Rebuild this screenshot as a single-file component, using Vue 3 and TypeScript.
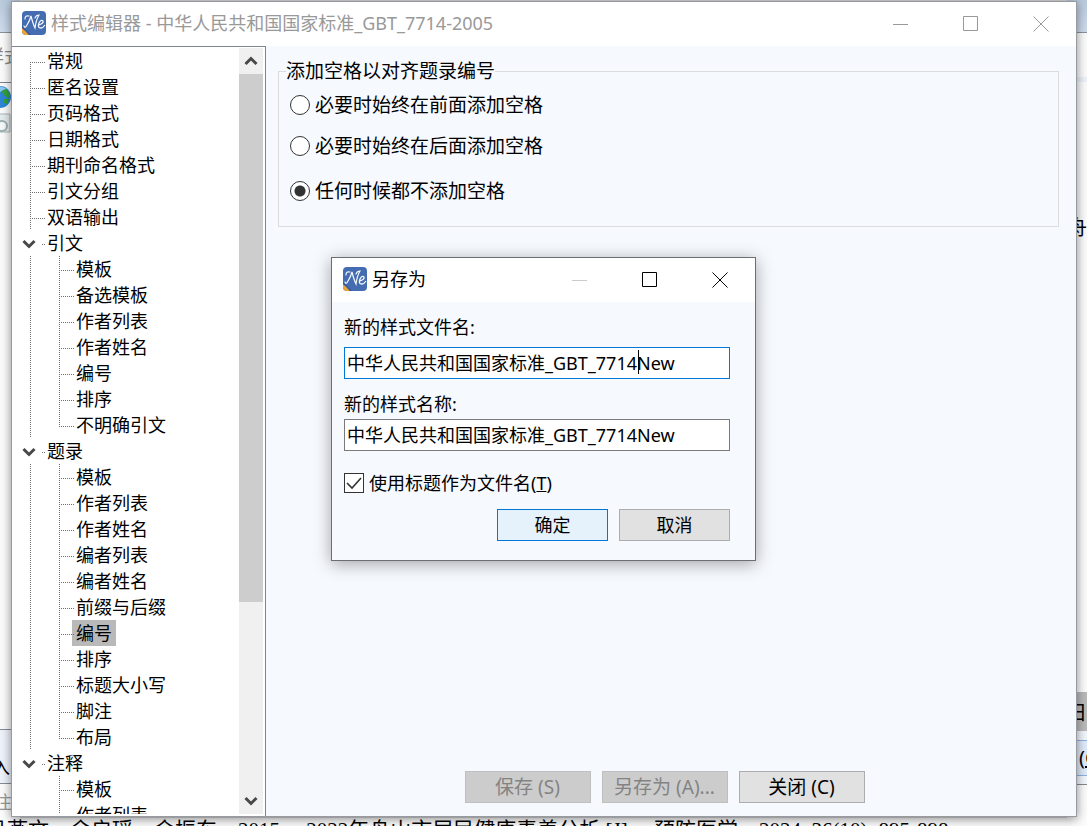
<script setup lang="ts">
import { ref } from 'vue'

interface TreeNode {
  label: string
  children?: string[]
}

interface Row {
  key: string
  label: string
  kind: 'leaf' | 'group' | 'child'
  first: boolean
  last: boolean
  trunk: boolean
}

const nodes: TreeNode[] = [
  { label: '常规' },
  { label: '匿名设置' },
  { label: '页码格式' },
  { label: '日期格式' },
  { label: '期刊命名格式' },
  { label: '引文分组' },
  { label: '双语输出' },
  { label: '引文', children: ['模板', '备选模板', '作者列表', '作者姓名', '编号', '排序', '不明确引文'] },
  {
    label: '题录',
    children: ['模板', '作者列表', '作者姓名', '编者列表', '编者姓名', '前缀与后缀', '编号', '排序', '标题大小写', '脚注', '布局'],
  },
  { label: '注释', children: ['模板', '作者列表'] },
]

const rows: Row[] = nodes.flatMap((node, i) => {
  const isLastGroup = i === nodes.length - 1
  const own: Row = {
    key: node.label,
    label: node.label,
    kind: node.children ? 'group' : 'leaf',
    first: i === 0,
    last: false,
    trunk: false,
  }
  const kids = (node.children ?? []).map((label, j, all): Row => ({
    key: `${node.label}/${label}`,
    label,
    kind: 'child',
    first: false,
    last: !isLastGroup && j === all.length - 1,
    trunk: !isLastGroup,
  }))
  return [own, ...kids]
})

const selected = ref('题录/编号')

const options = ['必要时始终在前面添加空格', '必要时始终在后面添加空格', '任何时候都不添加空格']
const spacing = ref(options[2])

const fileName = ref('中华人民共和国国家标准_GBT_7714New')
const styleName = ref('中华人民共和国国家标准_GBT_7714New')
const useTitle = ref(true)
</script>

<template>
  <div class="desktop">
    <div class="behind" aria-hidden="true">
      <div class="behind-sides">
        <div class="side side-left">
          <div class="glass"></div>
          <div class="tab"><span>样式</span></div>
          <div class="tools">
            <svg width="22" height="24" viewBox="0 0 22 24">
              <circle cx="11" cy="12" r="11" fill="#2f86d6" />
              <path d="M4 4Q11-1 18 4Q12 6 8 9Z" fill="#8fc8f2" />
              <path d="M12 6L17 4L21 9L20 13L16 11ZM15 14L20 14L18 19L15 18Z" fill="#35a23a" />
            </svg>
            <svg width="22" height="22" viewBox="0 0 22 22">
              <path d="M1 2H21V20H1Z" fill="#e6edee" stroke="#a9b5b8" />
              <circle cx="13" cy="14" r="5" fill="#f6fafa" stroke="#9fb0b5" stroke-width="2" />
            </svg>
          </div>
          <div class="foot"><span>入</span></div>
          <div class="note"><span>注</span></div>
        </div>
        <div class="side side-right">
          <div class="glass"></div>
          <div class="sheet"><span>舟</span></div>
          <div class="cell"><span>日</span></div>
          <div class="panel"><div class="panel-button">(<u>C</u></div></div>
        </div>
      </div>
      <p class="citation">且燕文，余启瑶，金振东．2015 —2022年舟山市居民健康素养分析 [J] ．预防医学，2024, 36(10): 895-898</p>
    </div>

    <main class="window">
      <header class="titlebar inactive">
        <svg class="logo" width="24" height="24" viewBox="0 0 24 24">
          <rect width="24" height="24" rx="4" fill="#446cb1" />
          <path d="M0 17L7 24H4Q0 24 0 20Z" fill="#f0a332" />
          <path d="M0 17L4 20L7 24L9 24L0 15Z" fill="#35558f" />
          <path d="M2 15Q3 18 5 14Q8 9 9 5Q11 13 13 17Q14 9 17 4Q14 4 13 7M3 8Q3 4 7 5" fill="none" stroke="#f4f7fc" stroke-width="1.2" stroke-linecap="round" />
          <path d="M17 14Q22 12 21 10Q19 8 17 12Q15 17 19 17Q21 17 23 14" fill="none" stroke="#f4f7fc" stroke-width="1.3" />
        </svg>
        <h1>样式编辑器 - 中华人民共和国国家标准_GBT_7714-2005</h1>
        <button type="button" aria-label="最小化"><svg width="16" height="16"><path d="M0 8.500H15" /></svg></button>
        <button type="button" aria-label="最大化"><svg width="16" height="16"><path d="M.5.5H14.500V14.500H.5Z" /></svg></button>
        <button type="button" aria-label="关闭"><svg width="16" height="16"><path d="M.5.5L15.500 15.500M15.500.5L.5 15.500" /></svg></button>
      </header>

      <div class="body">
        <nav class="tree-box">
          <ul class="tree">
            <li v-for="row in rows" :key="row.key" class="row">
              <span v-if="row.kind === 'child'" class="indent" :class="{ line: row.trunk }"></span>
              <span class="branch" :class="[row.kind, { first: row.first, last: row.last }]">
                <svg v-if="row.kind === 'group'" class="chevron" width="14" height="10" viewBox="0 0 14 10">
                  <path d="M1.500 2L7 7.500L12.500 2" />
                </svg>
              </span>
              <button type="button" class="node" :class="{ selected: row.key === selected }" @click="selected = row.key">
                {{ row.label }}
              </button>
            </li>
          </ul>
          <div class="scrollbar">
            <button type="button" aria-label="向上滚动"><svg width="14" height="10" viewBox="0 0 14 10"><path d="M1.500 8L7 2.500L12.500 8" /></svg></button>
            <div class="track"><div class="thumb"></div></div>
            <button type="button" aria-label="向下滚动"><svg width="14" height="10" viewBox="0 0 14 10"><path d="M1.500 2L7 7.500L12.500 2" /></svg></button>
          </div>
        </nav>

        <section class="content">
          <fieldset>
            <legend>添加空格以对齐题录编号</legend>
            <label v-for="option in options" :key="option" class="radio">
              <input v-model="spacing" type="radio" name="spacing" :value="option" />{{ option }}
            </label>
          </fieldset>
          <div class="actions">
            <button type="button" class="push" disabled>保存 (S)</button>
            <button type="button" class="push" disabled>另存为 (A)...</button>
            <button type="button" class="push">关闭 (C)</button>
          </div>
        </section>
      </div>

      <div class="overlay">
        <form class="dialog" role="dialog" aria-labelledby="dialog-title" @submit.prevent>
          <header class="titlebar">
            <svg class="logo" width="24" height="24" viewBox="0 0 24 24">
              <rect width="24" height="24" rx="4" fill="#446cb1" />
              <path d="M0 17L7 24H4Q0 24 0 20Z" fill="#f0a332" />
              <path d="M0 17L4 20L7 24L9 24L0 15Z" fill="#35558f" />
              <path d="M2 15Q3 18 5 14Q8 9 9 5Q11 13 13 17Q14 9 17 4Q14 4 13 7M3 8Q3 4 7 5" fill="none" stroke="#f4f7fc" stroke-width="1.2" stroke-linecap="round" />
              <path d="M17 14Q22 12 21 10Q19 8 17 12Q15 17 19 17Q21 17 23 14" fill="none" stroke="#f4f7fc" stroke-width="1.3" />
            </svg>
            <h2 id="dialog-title">另存为</h2>
            <button type="button" aria-label="最小化" disabled><svg width="16" height="16"><path d="M0 8.500H15" /></svg></button>
            <button type="button" aria-label="最大化"><svg width="16" height="16"><path d="M.5.5H14.500V14.500H.5Z" /></svg></button>
            <button type="button" aria-label="关闭"><svg width="16" height="16"><path d="M.5.5L15.500 15.500M15.500.5L.5 15.500" /></svg></button>
          </header>
          <div class="dialog-body">
            <label class="caption" for="file-name">新的样式文件名:</label>
            <div class="field active">
              <input id="file-name" v-model="fileName" type="text" />
              <i class="caret"></i>
            </div>
            <label class="caption second" for="style-name">新的样式名称:</label>
            <div class="field close">
              <input id="style-name" v-model="styleName" type="text" />
            </div>
            <label class="check">
              <input v-model="useTitle" type="checkbox" />
              <span>使用标题作为文件名(<u>T</u>)</span>
            </label>
            <div class="dialog-actions">
              <button type="submit" class="push primary">确定</button>
              <button type="button" class="push">取消</button>
            </div>
          </div>
        </form>
      </div>
    </main>
  </div>
</template>

<style>
body {
  margin: 0;
}
</style>

<style scoped>
* {
  box-sizing: border-box;
}

.desktop {
  position: relative;
  height: 100vh;
  overflow: hidden;
  background: #fcfcfc;
  color: #000;
  font: 400 18px/26px "Noto Sans", "Noto Sans CJK SC", sans-serif;
}

button,
input {
  margin: 0;
  font: inherit;
  color: inherit;
}

/* Surroundings that peek out around the window */
.behind {
  display: flex;
  flex-direction: column;
  height: 100%;
}

.behind-sides {
  display: flex;
  flex: 1;
  justify-content: space-between;
  min-height: 0;
  background: #d9d9d9;
}

.side {
  display: flex;
  flex-direction: column;
  width: 20px;
  overflow: hidden;
  background: #fcfcfc;
}

.side span {
  display: block;
  white-space: nowrap;
}

.glass {
  flex: none;
  height: 33px;
  border-bottom: 1px solid #8a929e;
  background: linear-gradient(#b9cadd, #cfdced);
}

.tab {
  flex: none;
  height: 50px;
  padding-top: 10px;
  border-bottom: 1px solid #7d8290;
  color: #888;
}

.tab span {
  margin-left: -14px;
}

.tools {
  flex: 1;
  padding-top: 2px;
}

.tools svg {
  display: block;
  margin: 0 0 3px -11px;
}

.foot {
  flex: none;
  height: 55px;
  padding-top: 24px;
  border: solid #858b98;
  border-width: 1px 0;
  background: #eff3fb;
}

.foot span {
  margin-left: -8px;
}

.note {
  flex: none;
  height: 34px;
  padding-top: 5px;
  color: #999;
}

.note span {
  margin-left: -6px;
}

.side-right {
  font-size: 20px;
}

.sheet {
  flex: 1;
  padding-top: 182px;
  background: linear-gradient(#fcfcfc 44px, #eef2f9 44px, #eef2f9 49px, #fcfcfc 49px);
}

.cell {
  flex: none;
  height: 39px;
  padding-top: 8px;
  background: #bababa;
}

.panel {
  flex: none;
  height: 54px;
  margin-bottom: 33px;
  padding: 9px 0;
  border-bottom: 1px solid #888;
  background: #f2f6fd;
}

.panel-button {
  height: 36px;
  padding: 4px 0 0 12px;
  border: solid #8db2e3;
  border-width: 1px 0;
  background: #dfebfb;
}

.citation {
  flex: none;
  height: 8px;
  margin: 0 0 0 -14px;
  overflow: hidden;
  font: 21px/24px "Liberation Serif", "Noto Sans CJK SC", serif;
  white-space: nowrap;
}

/* Main window */
.window {
  position: absolute;
  inset: 1px 10px 9px 11px;
  display: flex;
  flex-direction: column;
  border: 1px solid #979ba1;
  background: #f6f9fe;
  box-shadow: 0 2px 10px rgba(0, 0, 0, 0.45);
}

.titlebar {
  display: flex;
  flex: none;
  align-items: center;
  height: 44px;
  padding: 0 0 2px 11px;
  background: #fff;
}

.titlebar.inactive {
  padding-left: 10px;
  color: #999;
}

.titlebar h1,
.titlebar h2 {
  flex: 1;
  margin: 0 0 0 5px;
  font-size: 18px;
  font-weight: inherit;
  white-space: nowrap;
}

.titlebar button {
  display: grid;
  align-self: flex-start;
  place-items: center;
  width: 70px;
  height: 44px;
  padding: 0;
  border: 0;
  background: none;
}

.titlebar button:disabled {
  color: #ccc;
}

.titlebar button svg {
  fill: none;
  stroke: currentColor;
}

.body {
  display: flex;
  flex: 1;
  min-height: 0;
}

/* Category tree */
.tree-box {
  display: flex;
  flex: none;
  width: 254px;
  padding: 1px 2px 2px 0;
  border: solid #7f858f;
  border-width: 1px 1px 0 0;
  background: #fff;
}

.tree {
  flex: 1;
  margin: 0;
  padding: 0;
  overflow: hidden;
  list-style: none;
}

.row {
  display: flex;
  height: 26px;
}

.indent,
.branch {
  position: relative;
  flex: none;
}

.indent {
  width: 29px;
}

.branch {
  width: 31px;
}

.indent.line::before,
.branch::before {
  content: "";
  position: absolute;
  top: 0;
  bottom: 0;
  left: 18px;
  width: 1px;
  background: repeating-linear-gradient(#707070 0 1px, transparent 1px 2px);
}

.branch::after {
  content: "";
  position: absolute;
  top: 14px;
  left: 20px;
  width: 13px;
  height: 1px;
  background: repeating-linear-gradient(90deg, #707070 0 1px, transparent 1px 2px);
}

.branch.first::before {
  top: 14px;
}

.branch.last::before {
  bottom: 11px;
}

.branch.group::before {
  display: none;
}

.branch.group::after {
  left: 30px;
  width: 3px;
}

.chevron {
  display: block;
  margin: 9px 0 0 10px;
}

.chevron path,
.scrollbar path {
  fill: none;
  stroke: #484848;
  stroke-width: 3;
}

.node {
  height: 26px;
  padding: 0 4px;
  border: 0;
  background: none;
  line-height: 26px;
  white-space: nowrap;
}

.node.selected {
  background: #b9b9b9;
}

.scrollbar {
  display: flex;
  flex-direction: column;
  width: 24px;
  background: #f0f0f0;
}

.scrollbar button {
  display: grid;
  place-items: center;
  height: 26px;
  padding: 0;
  border: 0;
  background: none;
}

.track {
  flex: 1;
}

.thumb {
  height: 74%;
  background: #cdcdcd;
}

/* Settings pane */
.content {
  display: flex;
  flex: 1;
  flex-direction: column;
  justify-content: space-between;
  padding: 13px 17px 13px 12px;
  font-size: 19px;
}

fieldset {
  min-width: 0;
  margin: 0;
  padding: 10px 7px 23px;
  border: 1px solid #dcdcdc;
}

legend {
  padding: 0;
  line-height: 24px;
}

.radio {
  display: flex;
  gap: 5px;
  align-items: center;
  margin-left: 4px;
  line-height: 24px;
}

.radio + .radio {
  margin-top: 17px;
}

.radio + .radio + .radio {
  margin-top: 21px;
}

.radio input {
  width: 20px;
  height: 20px;
  border: 1px solid #333;
  border-radius: 50%;
  background: #fff;
  appearance: none;
}

.radio input:checked {
  background: radial-gradient(circle, #333 5px, #fff 6px);
}

.actions {
  display: flex;
  gap: 11px;
  justify-content: center;
  padding-right: 8px;
}

.push {
  height: 32px;
  padding: 0;
  border: 1px solid #adadad;
  background: #e1e1e1;
  line-height: 26px;
  white-space: nowrap;
}

.push:disabled {
  border-color: #bfbfbf;
  background: #ccc;
  color: #838383;
}

.push.primary {
  border-color: #0078d7;
  background: #e5f1fb;
}

.actions .push {
  width: 126px;
}

/* Save-as dialog */
.overlay {
  position: absolute;
  inset: 0 1px 0 0;
  display: grid;
  place-items: center;
}

.dialog {
  width: 425px;
  border: 1px solid #6b6e72;
  background: #f6f9fe;
  box-shadow: 0 3px 16px rgba(0, 0, 0, 0.35);
}

.dialog-body {
  padding: 12px 25px 19px 12px;
}

.caption {
  display: block;
}

.caption.second {
  margin-top: 12px;
}

.field {
  position: relative;
  margin-top: 7px;
}

.field.close {
  margin-top: 2px;
}

.field input {
  display: block;
  width: 100%;
  height: 32px;
  padding: 0 2px 2px;
  border: 1px solid #7a7a7a;
  outline: 0;
  background: #fff;
}

.field.active input {
  border-color: #0078d7;
}

.caret {
  position: absolute;
  top: 3px;
  left: 294px;
  width: 1px;
  height: 24px;
  background: #000;
}

.check {
  display: flex;
  gap: 5px;
  align-items: center;
  margin-top: 19px;
}

.check input {
  width: 20px;
  height: 20px;
  border: 1px solid #333;
  background: #fff;
  appearance: none;
}

.check input:checked {
  background: #fff url("data:image/svg+xml,%3Csvg xmlns='http://www.w3.org/2000/svg' width='18' height='18'%3E%3Cpath d='M2 9L7 14L16 4' fill='none' stroke='%23333' stroke-width='1.600'/%3E%3C/svg%3E");
}

.dialog-actions {
  display: flex;
  gap: 11px;
  justify-content: flex-end;
  margin-top: 13px;
}

.dialog-actions .push {
  width: 111px;
}
</style>
